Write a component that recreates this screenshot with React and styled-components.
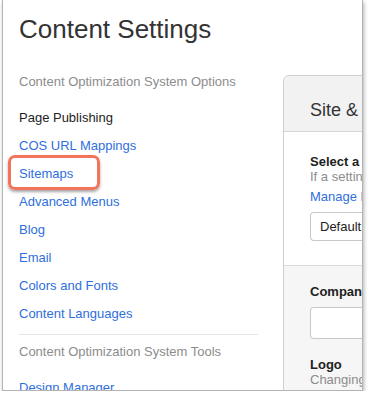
import styled, { createGlobalStyle } from "styled-components";

const Global = createGlobalStyle`
  html, body { margin: 0; padding: 0; background: #fff; }
  body { font-family: "Liberation Sans", Arial, sans-serif; }
`;

const Frame = styled.div`
  margin-left: 2px;
  width: 359px;
  height: 390px;
  border: 1px solid #b4b4b4;
  border-top: none;
  box-shadow: 1px 2px 4px rgba(0, 0, 0, 0.3);
  overflow: hidden;
  background: #fff;
`;

const Title = styled.h1`
  margin: 0;
  padding: 14px 0 0 16px;
  font-size: 26px;
  line-height: 30px;
  font-weight: normal;
  color: #333;
`;

const Body = styled.div`
  display: grid;
  grid-template-columns: 239px 1fr;
  column-gap: 25px;
  padding-left: 16px;
  margin-top: 28px;
`;

const Nav = styled.nav`
  display: flex;
  flex-direction: column;
`;

const NavHeading = styled.div`
  font-size: 13px;
  line-height: 20px;
  color: #8c8c8c;
  white-space: nowrap;
  margin-bottom: ${(p) => p.$gap}px;
`;

const NavItem = styled.a`
  position: relative;
  font-size: 13px;
  line-height: 28px;
  color: ${(p) => (p.$active ? "#1e1e1e" : "#2f6fdc")};
  text-decoration: none;
`;

const Highlight = styled.span`
  position: absolute;
  left: -11px;
  top: -5px;
  width: 86px;
  height: 29px;
  border: 3px solid #f2745a;
  border-radius: 7px;
  box-shadow: 0 2px 3px rgba(0, 0, 0, 0.35);
`;

const Divider = styled.hr`
  margin: 6px 0 7px;
  border: none;
  border-top: 1px solid #e6e6e6;
  height: 0;
`;

const Panel = styled.section`
  margin-top: 3px;
  width: 200px;
  border: 1px solid #cfcfcf;
  border-radius: 6px 0 0 0;
  overflow: hidden;
  white-space: nowrap;
`;

const PanelHeader = styled.div`
  height: 56px;
  box-sizing: border-box;
  padding: 23px 0 0 26px;
  background: #f2f2f2;
  border-bottom: 1px solid #d6d6d6;
  font-size: 18px;
  line-height: 22px;
  color: #333;
`;

const PanelSection = styled.div`
  background: ${(p) => (p.$shade ? "#f6f6f6" : "#fff")};
  border-top: ${(p) => (p.$shade ? "1px solid #dcdcdc" : "none")};
  padding: ${(p) => p.$pad};
  display: flex;
  flex-direction: column;
`;

const Label = styled.div`
  font-size: 13px;
  line-height: 15px;
  font-weight: bold;
  color: #222;
  margin-top: ${(p) => p.$top || 0}px;
`;

const Hint = styled.div`
  font-size: 13px;
  line-height: 15px;
  color: #8c8c8c;
`;

const Link = styled.div`
  font-size: 13px;
  line-height: 20px;
  color: #2f6fdc;
  margin-top: 3px;
`;

const Box = styled.div`
  height: ${(p) => p.$h}px;
  box-sizing: border-box;
  margin-top: ${(p) => p.$top}px;
  border: 1px solid #c8c8c8;
  border-right: none;
  border-radius: 4px 0 0 4px;
  background: #fff;
  padding-left: 9px;
  font-size: 13px;
  line-height: ${(p) => p.$h - 2}px;
  color: #222;
`;

const links = [
  "COS URL Mappings",
  "Sitemaps",
  "Advanced Menus",
  "Blog",
  "Email",
  "Colors and Fonts",
  "Content Languages",
];

export default function App() {
  return (
    <>
      <Global />
      <Frame>
        <Title>Content Settings</Title>
        <Body>
          <Nav>
            <NavHeading $gap={12}>Content Optimization System Options</NavHeading>
            <NavItem $active>Page Publishing</NavItem>
            {links.map((l) => (
              <NavItem key={l}>
                {l}
                {l === "Sitemaps" && <Highlight />}
              </NavItem>
            ))}
            <Divider />
            <NavHeading $gap={12}>Content Optimization System Tools</NavHeading>
            <NavItem>Design Manager</NavItem>
          </Nav>
          <Panel>
            <PanelHeader>Site &amp; Domain Settings</PanelHeader>
            <PanelSection $pad="22px 0 24px 26px">
              <Label>Select a domain to edit</Label>
              <Hint>If a setting is not set for a domain</Hint>
              <Link>Manage Domains</Link>
              <Box $h={29} $top={5}>Default settings</Box>
            </PanelSection>
            <PanelSection $shade $pad="18px 0 40px 26px">
              <Label>Company Name</Label>
              <Box $h={32} $top={8}></Box>
              <Label $top={18}>Logo</Label>
              <Hint>Changing the logo</Hint>
            </PanelSection>
          </Panel>
        </Body>
      </Frame>
    </>
  );
}
